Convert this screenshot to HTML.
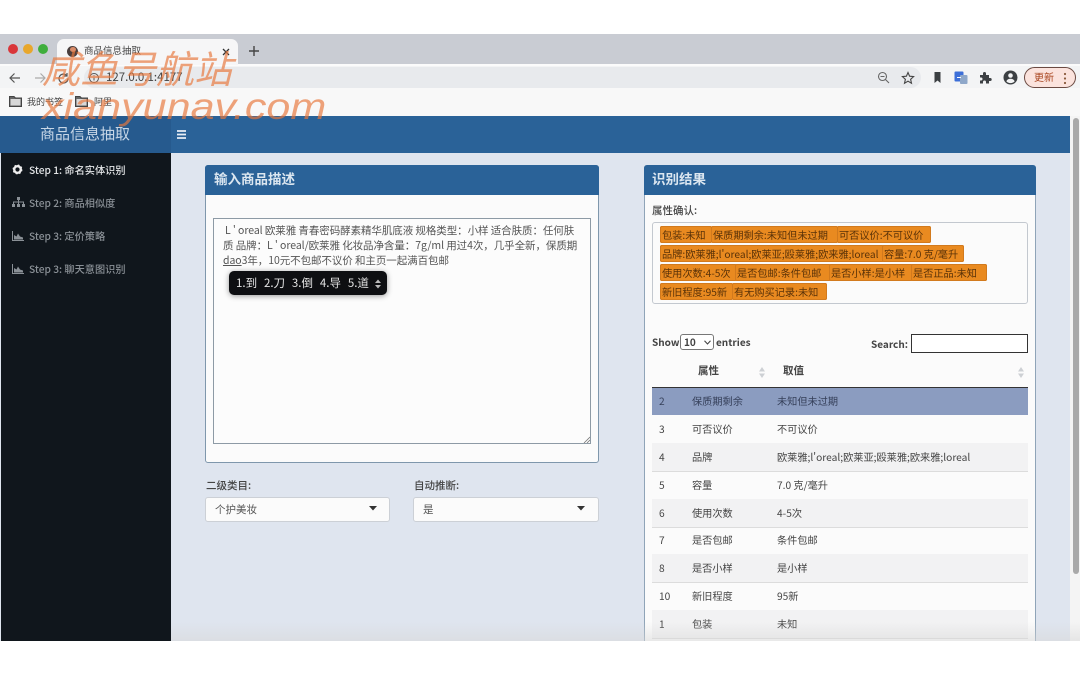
<!DOCTYPE html>
<html lang="zh"><head><meta charset="utf-8"><title>商品信息抽取</title>
<style>
html,body{margin:0;padding:0;background:#fff}
body{width:1080px;height:675px;overflow:hidden;position:relative;font-family:"Noto Sans CJK SC","Liberation Sans",sans-serif;color:#333}
.a,.a *{box-sizing:border-box}
.a{position:absolute}
.t{position:absolute;white-space:nowrap;line-height:1}
.tag{position:absolute;height:17px;background:#e98a20;border-radius:2px;font-size:10.200px;line-height:17px;color:#5a3208;padding:0 2px;white-space:nowrap;box-shadow:0 0 0 1px #d27a1d inset}
.row{position:absolute;left:652px;width:376px;height:28px;border-bottom:1px solid #dcdcdc;font-size:10.200px;line-height:28px;color:#444}
.row span{position:absolute;white-space:nowrap}
.row .n{left:7px}.row .k{left:40px}.row .v{left:125px}
.g{background:#f2f2f3}
.side{position:absolute;left:29px;font-size:10.200px;line-height:1;color:#8a9096;white-space:nowrap;font-weight:500}
.d{font-size:10.500px;letter-spacing:-.07px;color:#555}
</style></head><body>
<!-- browser chrome -->
<div class="a" style="left:0;top:34px;width:1080px;height:30px;background:#c9ccd3"></div>
<div class="a" style="left:0;top:64px;width:1080px;height:24px;background:#f3f4f5;border-top:2px solid #fbfbfb"></div>
<div class="a" style="left:84px;top:67px;width:837px;height:21px;background:#e8eaed;border-radius:11px"></div>
<div class="a" style="left:0;top:88px;width:1080px;height:28px;background:#f8f8f8"></div>
<div class="a" style="left:8px;top:44px;width:10px;height:10px;border-radius:50%;background:#d9363a"></div>
<div class="a" style="left:23px;top:44px;width:10px;height:10px;border-radius:50%;background:#e8a72c"></div>
<div class="a" style="left:38px;top:44px;width:10px;height:10px;border-radius:50%;background:#3fae3c"></div>
<div class="a" style="left:57px;top:39px;width:181px;height:26px;background:#f6f6f7;border-radius:7px 7px 0 0"></div>
<div class="a" style="left:67px;top:46px;width:11px;height:11px;border-radius:50%;background:#4a3f3e"></div>
<div class="a" style="left:70px;top:47px;width:6px;height:5px;border-radius:50%;background:#d98b68"></div>
<div class="t" style="left:84px;top:46px;font-size:9.500px;color:#444">商品信息抽取</div>
<svg class="a" style="left:221px;top:47px" width="10" height="10" viewBox="0 0 10 10"><path d="M2 2l6 6M8 2l-6 6" stroke="#333" stroke-width="1.300"/></svg>
<svg class="a" style="left:247px;top:44px" width="14" height="14" viewBox="0 0 14 14"><path d="M7 2v10M2 7h10" stroke="#444" stroke-width="1.400"/></svg>
<svg class="a" style="left:8px;top:71px" width="14" height="14" viewBox="0 0 14 14"><path d="M12 7H2M6.500 2.500 2 7l4.500 4.500" fill="none" stroke="#555" stroke-width="1.200"/></svg>
<svg class="a" style="left:33px;top:71px" width="14" height="14" viewBox="0 0 14 14"><path d="M2 7h10M7.500 2.500 12 7l-4.500 4.500" fill="none" stroke="#aaa" stroke-width="1.200"/></svg>
<svg class="a" style="left:56px;top:71px" width="15" height="15" viewBox="0 0 15 15"><path d="M12 7.500A4.500 4.500 0 1 1 10.500 4.200M11 2v3H8" fill="none" stroke="#555" stroke-width="1.200"/></svg>
<svg class="a" style="left:88px;top:72px" width="12" height="12" viewBox="0 0 12 12"><circle cx="6" cy="6" r="4.500" fill="none" stroke="#555"/><path d="M6 5.500v3M6 3.300v1" stroke="#555"/></svg>
<div class="t" style="left:106px;top:72px;font-size:11.500px;color:#444">127.0.0.1:4177</div>
<svg class="a" style="left:877px;top:71px" width="13" height="13" viewBox="0 0 13 13"><circle cx="5.500" cy="5.500" r="4" fill="none" stroke="#666" stroke-width="1.100"/><path d="M8.500 8.500 12 12M3.500 5.500h4" stroke="#666" stroke-width="1.100"/></svg>
<svg class="a" style="left:901px;top:71px" width="14" height="14" viewBox="0 0 14 14"><path d="M7 1.500 8.600 5.200l4 .4-3 2.700.9 4L7 10.200l-3.500 2.100.9-4-3-2.700 4-.4z" fill="none" stroke="#444" stroke-width="1.100"/></svg>
<svg class="a" style="left:933px;top:71px" width="9" height="13" viewBox="0 0 9 13"><path d="M1.500 1h6v11L4.500 9.500 1.500 12z" fill="#3c4043"/></svg>
<svg class="a" style="left:954px;top:71px" width="14" height="14" viewBox="0 0 14 14"><rect x="0.500" y="0.500" width="9" height="10" rx="1" fill="#3d6fd8"/><rect x="6" y="4" width="7.500" height="9" rx="1" fill="#8ea7c9"/><path d="M3 6.500h4" stroke="#fff"/></svg>
<svg class="a" style="left:979px;top:71px" width="13" height="13" viewBox="0 0 13 13"><path d="M1 4h3V2.500a1.500 1.500 0 0 1 3 0V4h3v3h1.200a1.500 1.500 0 0 1 0 3H10v2.500H7V11a1.500 1.500 0 0 0-3 0v1.500H1V9.500h1a1.500 1.500 0 0 0 0-3H1z" fill="#3c4043"/></svg>
<svg class="a" style="left:1003px;top:70px" width="15" height="15" viewBox="0 0 15 15"><circle cx="7.500" cy="7.500" r="7" fill="#3c4043"/><circle cx="7.500" cy="5.500" r="2.300" fill="#f3f4f5"/><path d="M3.300 11.200c1-1.800 2.500-2.400 4.200-2.400s3.200.6 4.200 2.400a5.600 5.600 0 0 1-8.400 0z" fill="#f3f4f5"/></svg>
<div class="a" style="left:1024px;top:67px;width:52px;height:21px;border-radius:11px;background:#fbe3dd;border:1px solid #6b4a42"></div>
<div class="t" style="left:1034px;top:72px;font-size:10px;color:#a8431d">更新</div>
<svg class="a" style="left:1063px;top:72px" width="4" height="13" viewBox="0 0 4 13"><circle cx="2" cy="2" r="1.100" fill="#8a5a3c"/><circle cx="2" cy="6.500" r="1.100" fill="#8a5a3c"/><circle cx="2" cy="11" r="1.100" fill="#8a5a3c"/></svg>
<svg class="a" style="left:9px;top:96px" width="13" height="11" viewBox="0 0 13 11"><path d="M.500.500h4.500l1.500 1.500h6v8.500H.500z" fill="#666" stroke="#444"/><rect x="1.500" y="3" width="10" height="6.500" fill="#d8d8d8"/></svg>
<div class="t" style="left:27px;top:97px;font-size:9px;color:#444">我的书签</div>
<svg class="a" style="left:75px;top:96px" width="13" height="11" viewBox="0 0 13 11"><path d="M.500.500h4.500l1.500 1.500h6v8.500H.500z" fill="#666" stroke="#444"/><rect x="1.500" y="3" width="10" height="6.500" fill="#d8d8d8"/></svg>
<div class="t" style="left:94px;top:97px;font-size:9px;color:#444">阿里</div>
<!-- app -->
<div class="a" style="left:0;top:153px;width:1080px;height:488px;background:#dfe5ef"></div>
<div class="a" style="left:166px;top:116px;width:904px;height:37px;background:#2a6298"></div>
<div class="a" style="left:0;top:116px;width:171px;height:37px;background:#265a8e"></div>
<div class="t" style="left:40px;top:126px;font-size:15px;color:#c6d6e6">商品信息抽取</div>
<svg class="a" style="left:176px;top:129px" width="12" height="11" viewBox="0 0 12 11"><path d="M1 2h9M1 5.500h9M1 9h9" stroke="#e8eef5" stroke-width="1.800"/></svg>
<div class="a" style="left:1070px;top:116px;width:10px;height:525px;background:#f4f4f4"></div>
<div class="a" style="left:1073px;top:118px;width:6px;height:456px;background:#a9a9a9;border-radius:3px"></div>
<div class="a" style="left:1px;top:153px;width:170px;height:488px;background:#10161c"></div>
<svg class="a" style="left:12px;top:164px" width="11" height="11" viewBox="0 0 11 11"><circle cx="5.500" cy="5.500" r="3.300" fill="none" stroke="#eee" stroke-width="2.400"/><circle cx="5.500" cy="5.500" r="4.300" fill="none" stroke="#eee" stroke-width="1.300" stroke-dasharray="1.700 1.700"/></svg>
<div class="side" style="top:165px;color:#e4e6e8">Step 1: 命名实体识别</div>
<svg class="a" style="left:12px;top:197px" width="13" height="11" viewBox="0 0 13 11"><path d="M5 0h3v3H5zM0 7h3v3H0zM5 7h3v3H5zM10 7h3v3h-3z" fill="#8a9096"/><path d="M1.500 7V5h10v2M6.500 3v4" fill="none" stroke="#8a9096"/></svg>
<div class="side" style="top:198px">Step 2: 商品相似度</div>
<svg class="a" style="left:12px;top:231px" width="12" height="10" viewBox="0 0 12 10"><path d="M.500 0v9.500H12" fill="none" stroke="#8a9096"/><path d="M2 8.500V4l2.500 1.500L6 2.500l2 3 3 1v2z" fill="#8a9096"/></svg>
<div class="side" style="top:231px">Step 3: 定价策略</div>
<svg class="a" style="left:12px;top:264px" width="12" height="10" viewBox="0 0 12 10"><path d="M.500 0v9.500H12" fill="none" stroke="#8a9096"/><path d="M2 8.500V4l2.500 1.500L6 2.500l2 3 3 1v2z" fill="#8a9096"/></svg>
<div class="side" style="top:264px">Step 3: 聊天意图识别</div>
<!-- left panel -->
<div class="a" style="left:205px;top:165px;width:394px;height:298px;background:#fbfbfb;border:1px solid #7f97ac;border-radius:3px"></div>
<div class="a" style="left:205px;top:165px;width:394px;height:30px;background:#2a6298;border-radius:3px 3px 0 0"></div>
<div class="t" style="left:214px;top:172px;font-size:13.500px;font-weight:bold;color:#dbe6f0">输入商品描述</div>
<div class="a" style="left:213px;top:218px;width:378px;height:226px;border:1px solid #8d9aa5;background:#fcfcfc"></div>
<div class="t d" style="left:225px;top:226px">L ' oreal 欧莱雅 青春密码酵素精华肌底液 规格类型：小样 适合肤质：任何肤</div>
<div class="t d" style="left:223px;top:241px">质 品牌：L ' oreal/欧莱雅 化妆品净含量：7g/ml 用过4次，几乎全新，保质期</div>
<div class="t d" style="left:223px;top:256px"><span style="text-decoration:underline">dao</span>3年，10元不包邮不议价 和主页一起满百包邮</div>
<div class="a" style="left:229px;top:271px;width:158px;height:24px;background:#0e0f12;border-radius:5px;box-shadow:0 1px 6px rgba(0,0,0,.4)"></div>
<div class="t" style="left:236px;top:278px;font-size:11.500px;color:#e3e3e3;word-spacing:4.300px">1.到 2.刀 3.倒 4.导 5.道</div>
<svg class="a" style="left:374px;top:279px" width="8" height="10" viewBox="0 0 8 10"><path d="M4 .500 7 4H1zM4 9.500 1 6h6z" fill="#bbb"/></svg>
<svg class="a" style="left:583px;top:436px" width="7" height="7" viewBox="0 0 7 7"><path d="M1 7 7 1M4 7l3-3" stroke="#777" stroke-width=".8"/></svg>
<div class="t" style="left:206px;top:481px;font-size:10.500px;font-weight:500;color:#444">二级类目:</div>
<div class="t" style="left:414px;top:481px;font-size:10.500px;font-weight:500;color:#444">自动推断:</div>
<div class="a" style="left:205px;top:497px;width:185px;height:25px;background:#fbfbfb;border:1px solid #ccd0d6;border-radius:3px"></div>
<div class="a" style="left:413px;top:497px;width:186px;height:25px;background:#fbfbfb;border:1px solid #ccd0d6;border-radius:3px"></div>
<div class="t" style="left:215px;top:505px;font-size:10.500px;color:#555">个护美妆</div>
<div class="t" style="left:423px;top:505px;font-size:10.500px;color:#555">是</div>
<svg class="a" style="left:369px;top:506px" width="8" height="5" viewBox="0 0 8 5"><path d="M0 0h8L4 4.500z" fill="#333"/></svg>
<svg class="a" style="left:577px;top:506px" width="8" height="5" viewBox="0 0 8 5"><path d="M0 0h8L4 4.500z" fill="#333"/></svg>
<!-- right panel -->
<div class="a" style="left:644px;top:165px;width:392px;height:476px;background:#fbfbfb;border-left:1px solid #8fa4b8;border-right:1px solid #8fa4b8;border-radius:3px 3px 0 0"></div>
<div class="a" style="left:644px;top:165px;width:392px;height:30px;background:#2a6298;border-radius:3px 3px 0 0"></div>
<div class="t" style="left:652px;top:172px;font-size:13.500px;font-weight:bold;color:#dbe6f0">识别结果</div>
<div class="t" style="left:652px;top:206px;font-size:10.500px;font-weight:500;color:#444">属性确认:</div>
<div class="a" style="left:652px;top:222px;width:376px;height:82px;border:1px solid #c3c8cf;border-radius:3px;background:#fbfbfb"></div>
<div class="tag" style="left:660px;top:226px;width:48px">包装:未知</div>
<div class="tag" style="left:711px;top:226px;width:123px">保质期剩余:未知但未过期</div>
<div class="tag" style="left:837px;top:226px;width:90px">可否议价:不可议价</div>
<div class="tag" style="left:660px;top:245px;width:220px">品牌:欧莱雅;l'oreal;欧莱亚;殴莱雅;欧来雅;loreal</div>
<div class="tag" style="left:882px;top:245px;width:78px">容量:7.0 克/毫升</div>
<div class="tag" style="left:660px;top:264px;width:73px">使用次数:4-5次</div>
<div class="tag" style="left:735px;top:264px;width:92px">是否包邮:条件包邮</div>
<div class="tag" style="left:829px;top:264px;width:80px">是否小样:是小样</div>
<div class="tag" style="left:911px;top:264px;width:72px">是否正品:未知</div>
<div class="tag" style="left:660px;top:283px;width:69px">新旧程度:95新</div>
<div class="tag" style="left:732px;top:283px;width:91px">有无购买记录:未知</div>
<div class="t" style="left:652px;top:337px;font-size:10px;font-weight:bold;color:#444">Show</div>
<div class="a" style="left:680px;top:334px;width:34px;height:16px;border:1px solid #777;border-radius:3px;background:#fff"></div>
<div class="t" style="left:684px;top:337px;font-size:10px;font-weight:bold;color:#444">10</div>
<svg class="a" style="left:704px;top:340px" width="7" height="5" viewBox="0 0 7 5"><path d="M.500.800 3.500 4l3-3.200" fill="none" stroke="#444" stroke-width="1.100"/></svg>
<div class="t" style="left:716px;top:337px;font-size:10px;font-weight:bold;color:#444">entries</div>
<div class="t" style="left:871px;top:339px;font-size:10px;font-weight:bold;color:#444">Search:</div>
<div class="a" style="left:911px;top:334px;width:117px;height:19px;border:1px solid #333;background:#fff"></div>
<div class="t" style="left:698px;top:366px;font-size:10.500px;font-weight:bold;color:#444">属性</div>
<div class="t" style="left:783px;top:366px;font-size:10.500px;font-weight:bold;color:#444">取值</div>
<svg class="a" style="left:759px;top:367px" width="6" height="11" viewBox="0 0 6 11"><path d="M3 0 6 4.500H0zM3 11 0 6.500h6z" fill="#cdd0d4"/></svg>
<svg class="a" style="left:1018px;top:367px" width="6" height="11" viewBox="0 0 6 11"><path d="M3 0 6 4.500H0zM3 11 0 6.500h6z" fill="#cdd0d4"/></svg>
<div class="a" style="left:652px;top:387px;width:376px;height:1px;background:#333"></div>
<div class="row" style="top:388px;background:#8b9cc0;border-bottom:none;height:27px;line-height:26px;color:#36405a"><span class="n">2</span><span class="k">保质期剩余</span><span class="v">未知但未过期</span></div>
<div class="row" style="top:415px"><span class="n">3</span><span class="k">可否议价</span><span class="v">不可议价</span></div>
<div class="row g" style="top:443px"><span class="n">4</span><span class="k">品牌</span><span class="v">欧莱雅;l'oreal;欧莱亚;殴莱雅;欧来雅;loreal</span></div>
<div class="row" style="top:471px"><span class="n">5</span><span class="k">容量</span><span class="v">7.0 克/毫升</span></div>
<div class="row g" style="top:499px"><span class="n">6</span><span class="k">使用次数</span><span class="v">4-5次</span></div>
<div class="row" style="top:526px"><span class="n">7</span><span class="k">是否包邮</span><span class="v">条件包邮</span></div>
<div class="row g" style="top:554px"><span class="n">8</span><span class="k">是否小样</span><span class="v">是小样</span></div>
<div class="row" style="top:582px"><span class="n">10</span><span class="k">新旧程度</span><span class="v">95新</span></div>
<div class="row g" style="top:610px"><span class="n">1</span><span class="k">包装</span><span class="v">未知</span></div>
<div class="a" style="left:0;top:641px;width:1080px;height:34px;background:#fff"></div>
<div class="a" style="left:171px;top:622px;width:909px;height:19px;background:linear-gradient(rgba(225,225,225,0),rgba(215,215,215,.5))"></div>
<!-- watermark -->
<div class="t" style="left:42px;top:48px;font-size:38px;font-style:italic;font-weight:400;color:rgba(232,120,60,.68)">咸鱼号航站</div>
<div class="t" style="left:42px;top:88px;font-family:'Liberation Sans',sans-serif;font-size:37px;font-style:italic;color:rgba(232,120,60,.68);transform:scaleX(1.165);transform-origin:0 0">xianyunav.com</div>
</body></html>
